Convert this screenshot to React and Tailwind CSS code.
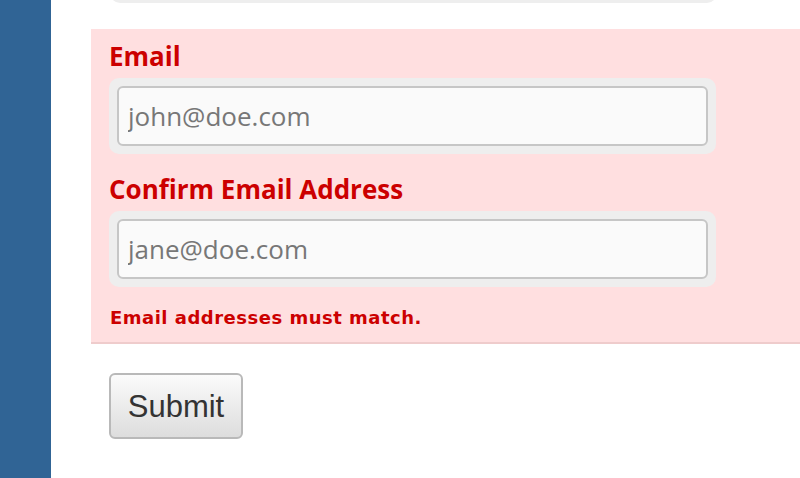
import React from 'react';

const Field = ({ label, placeholder, className = '' }) => (
  <div className={className}>
    <label className="block text-[26px] leading-[32px] font-bold text-[#cc0000] mb-[6px]">{label}</label>
    <div className="w-[607px] bg-[#eeeeee] rounded-[10px] p-[8px]">
      <input
        type="email"
        placeholder={placeholder}
        className="w-full h-[60px] rounded-[6px] border-2 border-[#c6c6c6] bg-[#fafafa] px-[9px] text-[26px] text-[#333] placeholder:text-[#777] outline-none"
      />
    </div>
  </div>
);

const App = () => {
  return (
    <div className="flex h-[478px] overflow-hidden bg-white font-['Open_Sans',sans-serif]">
      <aside className="w-[51px] shrink-0 bg-[#306495]" />
      <main className="flex-1 pl-[40px]">
        {/* bottom edge of the previous field */}
        <div className="pl-[19px] h-[3px] overflow-hidden">
          <div className="w-[607px] h-[76px] -mt-[73px] bg-[#eeeeee] rounded-[10px]" />
        </div>

        <section className="mt-[26px] bg-[#ffdfe0] border-b-2 border-[#efcccc] pl-[18px] pt-[11px] pb-[12px]">
          <Field label="Email" placeholder="john@doe.com" />
          <Field label="Confirm Email Address" placeholder="jane@doe.com" className="mt-[19px]" />
          <p className="mt-[19px] pl-px text-[18px] leading-[24px] font-bold tracking-[0.5px] text-[#cc0000] font-['DejaVu_Sans',sans-serif]">
            Email addresses must match.
          </p>
        </section>

        <div className="pl-[18px] mt-[29px]">
          <button
            type="submit"
            className="w-[134px] h-[66px] pt-[3px] rounded-[6px] border-2 border-[#b9b9b9] bg-gradient-to-b from-[#fbfbfb] to-[#dddddd] text-[31px] text-[#333] font-['Liberation_Sans',sans-serif]"
          >
            Submit
          </button>
        </div>
      </main>
    </div>
  );
};

export default App;
